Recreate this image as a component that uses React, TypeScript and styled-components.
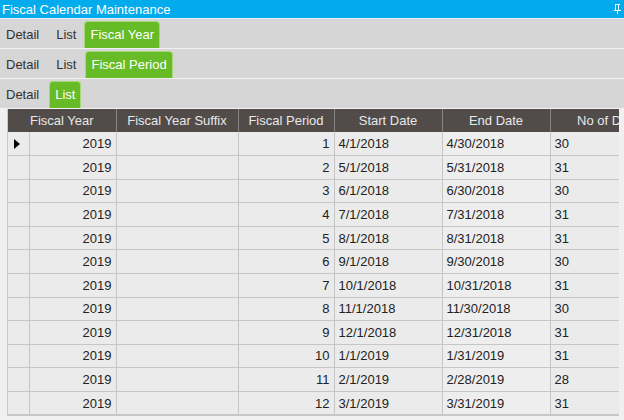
import React from 'react';
import styled, { createGlobalStyle } from 'styled-components';

const GlobalStyle = createGlobalStyle`
  html, body {
    margin: 0;
    padding: 0;
    background: #f0f0f0;
    font-family: 'Liberation Sans', Arial, sans-serif;
  }
`;

const Frame = styled.div`
  width: 624px;
  height: 420px;
  overflow: hidden;
  background: #f0f0f0;
`;

const TitleBar = styled.div`
  height: 18px;
  background: #02acec;
  color: #ffffff;
  font-size: 13px;
  display: flex;
  align-items: center;
  justify-content: space-between;
  padding: 0 3px 0 2px;
  border-bottom: 1px solid #e6eef2;
`;

const TabRow = styled.div`
  height: 30px;
  background: #d6d6d6;
  border-bottom: 1px solid #f2f2f2;
  display: flex;
  align-items: flex-end;
  padding-left: 6px;
  box-sizing: border-box;
`;

const TabLink = styled.span<{ $after: number }>`
  font-size: 13px;
  color: #333333;
  height: 27px;
  line-height: 27px;
  margin-right: ${({ $after }) => $after}px;
`;

const ActiveTab = styled.span`
  font-size: 13px;
  color: #ffffff;
  background: #66bb26;
  border: 1px solid #a6d87a;
  border-bottom: none;
  border-radius: 4px 4px 0 0;
  height: 26px;
  line-height: 25px;
  padding: 0 5px;
`;

const Clip = styled.div`
  margin-left: 7px;
  width: 612px;
  overflow: hidden;
  border-left: 1px solid #c8c8c8;
  border-bottom: 1px solid #c8c8c8;
  box-sizing: border-box;
`;

const Grid = styled.table`
  border-collapse: collapse;
  table-layout: fixed;
  width: 660px;
  font-size: 13px;
`;

const Head = styled.th`
  background: #514c4a;
  color: #e8e8e8;
  font-weight: normal;
  height: 23px;
  padding: 0;
  border-left: 1px solid #8a8583;
  text-align: center;
  white-space: nowrap;
  overflow: hidden;
  &:first-child {
    border-left: none;
  }
`;

const Row = styled.tr`
  height: 23.58px;
`;

const Cell = styled.td<{ $align?: 'left' | 'right'; $tint?: string }>`
  background: ${({ $tint }) => $tint ?? '#ebebeb'};
  color: #222222;
  border: 1px solid #c6c6c6;
  border-top: none;
  padding: 0 4px;
  text-align: ${({ $align }) => $align ?? 'left'};
  white-space: nowrap;
  overflow: hidden;
`;

const Marker = styled.td`
  background: #ebebeb;
  border: 1px solid #c6c6c6;
  border-left: none;
  border-top: none;
  padding: 0 0 0 6px;
`;

const Pin = () => (
  <svg width="7" height="10" viewBox="0 0 7 10">
    <path d="M1 0h5v1H5v5h2v1H4v3H3V7H0V6h1V1zM2 1v5h2V1z" fill="#ffffff" fillRule="evenodd" />
  </svg>
);

const Arrow = () => (
  <svg width="6" height="10" viewBox="0 0 6 10" style={{ display: 'block' }}>
    <path d="M0 0l6 5-6 5z" fill="#000000" />
  </svg>
);

const periods = [
  ['4/1/2018', '4/30/2018', '30'],
  ['5/1/2018', '5/31/2018', '31'],
  ['6/1/2018', '6/30/2018', '30'],
  ['7/1/2018', '7/31/2018', '31'],
  ['8/1/2018', '8/31/2018', '31'],
  ['9/1/2018', '9/30/2018', '30'],
  ['10/1/2018', '10/31/2018', '31'],
  ['11/1/2018', '11/30/2018', '30'],
  ['12/1/2018', '12/31/2018', '31'],
  ['1/1/2019', '1/31/2019', '31'],
  ['2/1/2019', '2/28/2019', '28'],
  ['3/1/2019', '3/31/2019', '31'],
];

export default function App(): JSX.Element {
  return (
    <Frame>
      <GlobalStyle />
      <TitleBar>
        <span>Fiscal Calendar Maintenance</span>
        <Pin />
      </TitleBar>

      <TabRow>
        <TabLink $after={17}>Detail</TabLink>
        <TabLink $after={8}>List</TabLink>
        <ActiveTab>Fiscal Year</ActiveTab>
      </TabRow>
      <TabRow>
        <TabLink $after={17}>Detail</TabLink>
        <TabLink $after={9}>List</TabLink>
        <ActiveTab>Fiscal Period</ActiveTab>
      </TabRow>
      <TabRow>
        <TabLink $after={10}>Detail</TabLink>
        <ActiveTab>List</ActiveTab>
      </TabRow>

      <Clip>
        <Grid>
          <colgroup>
            <col style={{ width: 21 }} />
            <col style={{ width: 87 }} />
            <col style={{ width: 122 }} />
            <col style={{ width: 96 }} />
            <col style={{ width: 108 }} />
            <col style={{ width: 108 }} />
            <col style={{ width: 118 }} />
          </colgroup>
          <thead>
            <tr>
              <Head colSpan={2}>Fiscal Year</Head>
              <Head>Fiscal Year Suffix</Head>
              <Head>Fiscal Period</Head>
              <Head>Start Date</Head>
              <Head>End Date</Head>
              <Head>No of Days</Head>
            </tr>
          </thead>
          <tbody>
            {periods.map(([start, end, days], i) => (
              <Row key={start}>
                <Marker>{i === 0 ? <Arrow /> : null}</Marker>
                <Cell $align="right">2019</Cell>
                <Cell />
                <Cell $align="right">{i + 1}</Cell>
                <Cell>{start}</Cell>
                <Cell $tint="#eeeeee">{end}</Cell>
                <Cell>{days}</Cell>
              </Row>
            ))}
          </tbody>
        </Grid>
      </Clip>
    </Frame>
  );
}
